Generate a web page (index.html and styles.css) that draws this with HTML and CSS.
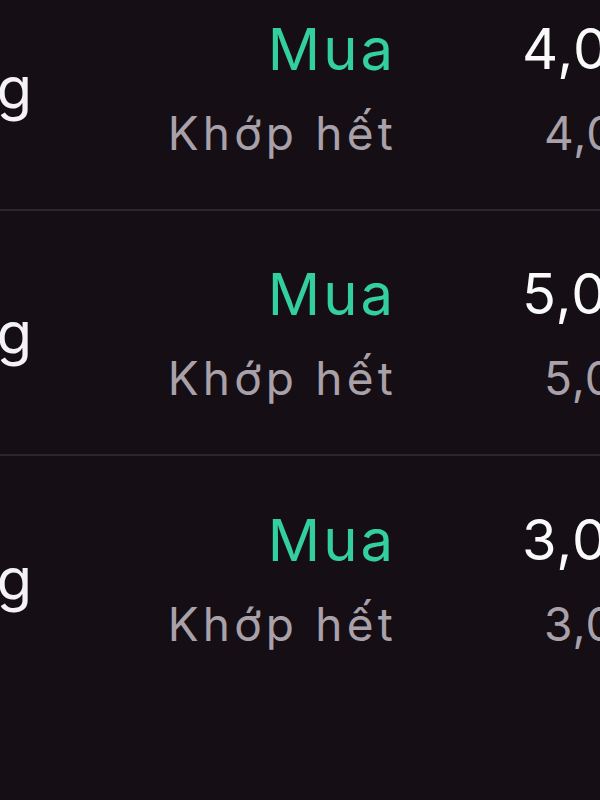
FILE: index.html
```html
<!DOCTYPE html>
<html lang="vi">
<head>
    <meta charset="UTF-8">
    <meta name="viewport" content="width=device-width, initial-scale=1.0">
    <title>Lệnh đặt</title>
    <link rel="stylesheet" href="styles.css">
</head>
<body>
    <div class="order-list">
        <div class="order-row">
            <div class="order-type">Thường</div>
            <div class="order-status">
                <span class="side buy">Mua</span>
                <span class="state">Khớp hết</span>
            </div>
            <div class="order-qty">
                <span class="qty">4,000</span>
                <span class="matched">4,000</span>
            </div>
        </div>
        <div class="order-row">
            <div class="order-type">Thường</div>
            <div class="order-status">
                <span class="side buy">Mua</span>
                <span class="state">Khớp hết</span>
            </div>
            <div class="order-qty">
                <span class="qty">5,000</span>
                <span class="matched">5,000</span>
            </div>
        </div>
        <div class="order-row">
            <div class="order-type">Thường</div>
            <div class="order-status">
                <span class="side buy">Mua</span>
                <span class="state">Khớp hết</span>
            </div>
            <div class="order-qty">
                <span class="qty">3,000</span>
                <span class="matched">3,000</span>
            </div>
        </div>
    </div>
</body>
</html>
```

FILE: styles.css
```css
body { margin: 0; background: #150f15; font-family: Inter, "Noto Sans", sans-serif; color: #fff; overflow: hidden; height: 800px; }
.order-list { margin-top: -34px; }
.order-row { display: grid; grid-template-columns: 32px 360px 1fr; align-items: center; height: 245px; border-bottom: 2px solid #2c272e; box-sizing: border-box; white-space: nowrap; }
.order-row:last-child { border-bottom: none; }
.order-type { display: flex; justify-content: flex-end; font-size: 58px; line-height: 70px; color: #f4f2f4; }
.order-status, .order-qty { display: flex; flex-direction: column; }
.order-status { align-items: flex-end; }
.order-qty { padding-left: 130px; overflow: hidden; }
.side { font-size: 58px; line-height: 70px; letter-spacing: 3px; margin-right: -4px; }
.buy { color: #33cf9c; }
.state { font-size: 46px; line-height: 56px; margin-top: 21px; letter-spacing: 4.2px; margin-right: -5px; color: #a9a1aa; }
.qty { font-size: 56px; line-height: 70px; letter-spacing: 1px; color: #fafafa; }
.matched { font-size: 46px; line-height: 56px; margin-top: 21px; padding-left: 22px; letter-spacing: 1px; color: #a9a1aa; }
```
